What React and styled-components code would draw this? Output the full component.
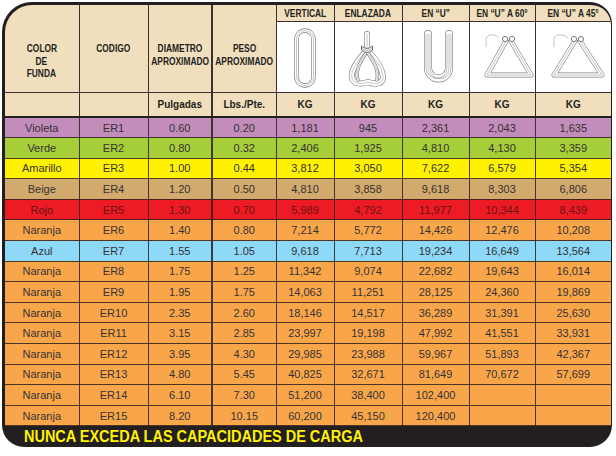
import React from 'react'
import styled, { createGlobalStyle } from 'styled-components'

const GlobalStyle = createGlobalStyle`
  html, body {
    margin: 0;
    padding: 0;
    background: #ffffff;
  }
`

const rows = [
  ['Violeta', 'ER1', '0.60', '0.20', '1,181', '945', '2,361', '2,043', '1,635', 'violet'],
  ['Verde', 'ER2', '0.80', '0.32', '2,406', '1,925', '4,810', '4,130', '3,359', 'green'],
  ['Amarillo', 'ER3', '1.00', '0.44', '3,812', '3,050', '7,622', '6,579', '5,354', 'yellow'],
  ['Beige', 'ER4', '1.20', '0.50', '4,810', '3,858', '9,618', '8,303', '6,806', 'beige'],
  ['Rojo', 'ER5', '1.30', '0.70', '5,989', '4,792', '11,977', '10,344', '8,439', 'red'],
  ['Naranja', 'ER6', '1.40', '0.80', '7,214', '5,772', '14,426', '12,476', '10,208', 'orange'],
  ['Azul', 'ER7', '1.55', '1.05', '9,618', '7,713', '19,234', '16,649', '13,564', 'blue'],
  ['Naranja', 'ER8', '1.75', '1.25', '11,342', '9,074', '22,682', '19,643', '16,014', 'orange'],
  ['Naranja', 'ER9', '1.95', '1.75', '14,063', '11,251', '28,125', '24,360', '19,869', 'orange'],
  ['Naranja', 'ER10', '2.35', '2.60', '18,146', '14,517', '36,289', '31,391', '25,630', 'orange'],
  ['Naranja', 'ER11', '3.15', '2.85', '23,997', '19,198', '47,992', '41,551', '33,931', 'orange'],
  ['Naranja', 'ER12', '3.95', '4.30', '29,985', '23,988', '59,967', '51,893', '42,367', 'orange'],
  ['Naranja', 'ER13', '4.80', '5.45', '40,825', '32,671', '81,649', '70,672', '57,699', 'orange'],
  ['Naranja', 'ER14', '6.10', '7.30', '51,200', '38,400', '102,400', '', '', 'orange'],
  ['Naranja', 'ER15', '8.20', '10.15', '60,200', '45,150', '120,400', '', '', 'orange'],
]

const fills = {
  violet: '#c28cbb',
  green: '#a6ce39',
  yellow: '#fff200',
  beige: '#d3aa6e',
  red: '#ed1c24',
  orange: '#f9a64b',
  blue: '#8ed8f8',
}

const widths = [74, 69, 64, 64, 58, 68, 67, 66, 76]

const Frame = styled.div`
  margin: 2px 0 0 2px;
  width: 610px;
  box-sizing: border-box;
  padding: 3px 1px 0 3px;
  background: #231f20;
  border-radius: 30px 22px 22px 22px;
  overflow: hidden;
`

const Clip = styled.div`
  border-radius: 27px 20px 0 0;
  overflow: hidden;
`

const Table = styled.table`
  width: 606px;
  border-collapse: collapse;
  table-layout: fixed;
  font-family: "Liberation Sans", Arial, sans-serif;
`

/* the print uses a condensed bold face: squeeze Liberation Sans Bold */
const Squeeze = styled.div`
  display: flex;
  justify-content: center;
  white-space: nowrap;
  span {
    display: inline-block;
    transform: scaleX(${p => p.$x || 0.8});
  }
`

const HeadCell = styled.th`
  background: #f0debc;
  color: #231f20;
  font-weight: bold;
  font-size: 10.5px;
  line-height: 12.5px;
  text-align: center;
  vertical-align: top;
  padding: 37px 0 0;
  border: 1px solid #3a3030;
  border-top: none;
  border-left-width: ${p => (p.$thick ? '2px' : '1px')};
  &:first-child { border-left: none; }
  &:last-child { border-right: none; }
`

const LoadHead = styled(HeadCell)`
  height: 16px;
  font-size: 10.5px;
  line-height: 16px;
  vertical-align: middle;
  padding: 0;
`

const PictureCell = styled.td`
  background: #ffffff;
  height: 70px;
  padding: 0;
  border: 1px solid #3a3030;
  &:last-child { border-right: none; }
  svg { display: block; margin: 0 auto; }
`

const UnitCell = styled.td`
  background: #f0debc;
  color: #231f20;
  height: 23px;
  padding: 0;
  font-weight: bold;
  font-size: 10px;
  text-align: center;
  border: 1px solid #3a3030;
  border-bottom: 2px solid #231f20;
  border-left-width: ${p => (p.$thick ? '2px' : '1px')};
  &:first-child { border-left: none; }
  &:last-child { border-right: none; }
`

const Row = styled.tr`
  height: 20.6px;
  background: ${p => fills[p.$tone]};
  color: ${p => (p.$tone === 'red' ? '#6a1014' : '#363232')};
`

const Cell = styled.td`
  padding: 0;
  font-size: 11px;
  text-align: center;
  border: 1px solid rgba(45, 32, 28, 0.85);
  border-left-width: ${p => (p.$thick ? '2px' : '1px')};
  &:first-child { border-left: none; }
  &:last-child { border-right: none; }
`

const Footer = styled.div`
  height: 21px;
  padding-left: 19px;
  color: #fff200;
  font-family: "Liberation Sans", Arial, sans-serif;
  font-weight: bold;
  font-size: 16px;
  line-height: 21px;
  white-space: nowrap;
  span {
    display: inline-block;
    transform: scaleX(0.905);
    transform-origin: left center;
  }
`

const Strand = ({ d, w = 6 }) => (
  <g fill='none' strokeLinecap='round' strokeLinejoin='round'>
    <path d={d} stroke='#808080' strokeWidth={w} />
    <path d={d} stroke='#ffffff' strokeWidth={w - 1.3} />
    <path d={d} stroke='#a0a0a0' strokeWidth='0.6' />
  </g>
)

const VerticalIcon = () => (
  <svg width='58' height='70' viewBox='0 0 58 70'>
    <Strand d='M19.5 17 A8.5 8.5 0 0 1 36.5 17 V55 A8.5 8.5 0 0 1 19.5 55 Z' w={4.5} />
  </svg>
)

const ChokerIcon = () => (
  <svg width='68' height='70' viewBox='0 0 68 70'>
    <Strand d='M32 28 C24 37 15 48 17 56 C19 63 28 62 33 60 C40 63 49 62 48 54 C47 46 40 36 32 28' w={6} />
    <Strand d='M31 31 C25 40 20 49 23 58' w={3.5} />
    <Strand d='M33 31 C39 40 44 48 42 58' w={3.5} />
    <Strand d='M32 12 V26' w={6} />
    <path d='M26.5 24 Q32 29 37.5 24 V28 Q32 33 26.5 28 Z' fill='#fff' stroke='#6f6f6f' strokeWidth='1' />
    <path d='M27 26.5 Q32 30.5 37 26.5' fill='none' stroke='#8a8a8a' strokeWidth='0.7' />
  </svg>
)

const uPath = 'M25 12 V46 A10.5 10.5 0 0 0 46 46 V12'

const UIcon = () => (
  <svg width='67' height='70' viewBox='0 0 67 70'>
    <Strand d={uPath} w={8} />
    <path d={uPath} fill='none' stroke='#9a9a9a' strokeWidth='0.6' transform='translate(-2 0)' />
    <path d={uPath} fill='none' stroke='#9a9a9a' strokeWidth='0.6' transform='translate(2 0)' />
  </svg>
)

const TriangleIcon = ({ width, apex, left, right, hook }) => (
  <svg width={width} height='70' viewBox={`0 0 ${width} 70`}>
    <path d={hook} fill='none' stroke='#c4c4c4' strokeWidth='1' />
    <Strand d={`M${apex - 2} 19 L${left} 53 H${right} L${apex + 3} 19`} w={5} />
    <circle cx={apex - 3} cy='17' r='2.6' fill='#fff' stroke='#7c7c7c' strokeWidth='1' />
    <circle cx={apex + 4} cy='17' r='2.6' fill='#fff' stroke='#7c7c7c' strokeWidth='1' />
  </svg>
)

const Lines = ({ children, x }) => (
  <>
    {children.map((t, i) => (
      <Squeeze key={i} $x={x}><span>{t}</span></Squeeze>
    ))}
  </>
)

const App = () => (
  <>
    <GlobalStyle />
    <Frame>
      <Clip>
        <Table>
          <colgroup>
            {widths.map((w, i) => <col key={i} style={{ width: w }} />)}
          </colgroup>
          <thead>
            <tr>
              <HeadCell rowSpan={2}><Lines>{['COLOR', 'DE', 'FUNDA']}</Lines></HeadCell>
              <HeadCell rowSpan={2}><Lines>{['CODIGO']}</Lines></HeadCell>
              <HeadCell rowSpan={2}><Lines>{['DIAMETRO', 'APROXIMADO']}</Lines></HeadCell>
              <HeadCell rowSpan={2} $thick><Lines>{['PESO', 'APROXIMADO']}</Lines></HeadCell>
              <LoadHead><Lines>{['VERTICAL']}</Lines></LoadHead>
              <LoadHead><Lines>{['ENLAZADA']}</Lines></LoadHead>
              <LoadHead><Lines>{['EN “U”']}</Lines></LoadHead>
              <LoadHead><Lines>{['EN “U” A 60°']}</Lines></LoadHead>
              <LoadHead><Lines>{['EN “U” A 45°']}</Lines></LoadHead>
            </tr>
            <tr>
              <PictureCell><VerticalIcon /></PictureCell>
              <PictureCell><ChokerIcon /></PictureCell>
              <PictureCell><UIcon /></PictureCell>
              <PictureCell>
                <TriangleIcon width={66} apex={38} left={17} right={61} hook='M16 25 V17 Q17 12 24 13 Q27 13 29 16' />
              </PictureCell>
              <PictureCell>
                <TriangleIcon width={76} apex={41} left={18} right={66} hook='M18 25 V17 Q19 12 26 13 Q30 13 32 16' />
              </PictureCell>
            </tr>
            <tr>
              <UnitCell />
              <UnitCell />
              <UnitCell>Pulgadas</UnitCell>
              <UnitCell $thick>Lbs./Pte.</UnitCell>
              <UnitCell>KG</UnitCell>
              <UnitCell>KG</UnitCell>
              <UnitCell>KG</UnitCell>
              <UnitCell>KG</UnitCell>
              <UnitCell>KG</UnitCell>
            </tr>
          </thead>
          <tbody>
            {rows.map((r, i) => (
              <Row key={i} $tone={r[9]}>
                {r.slice(0, 9).map((v, j) => (
                  <Cell key={j} $thick={j === 3}>{v}</Cell>
                ))}
              </Row>
            ))}
          </tbody>
        </Table>
      </Clip>
      <Footer><span>NUNCA EXCEDA LAS CAPACIDADES DE CARGA</span></Footer>
    </Frame>
  </>
)

export default App
